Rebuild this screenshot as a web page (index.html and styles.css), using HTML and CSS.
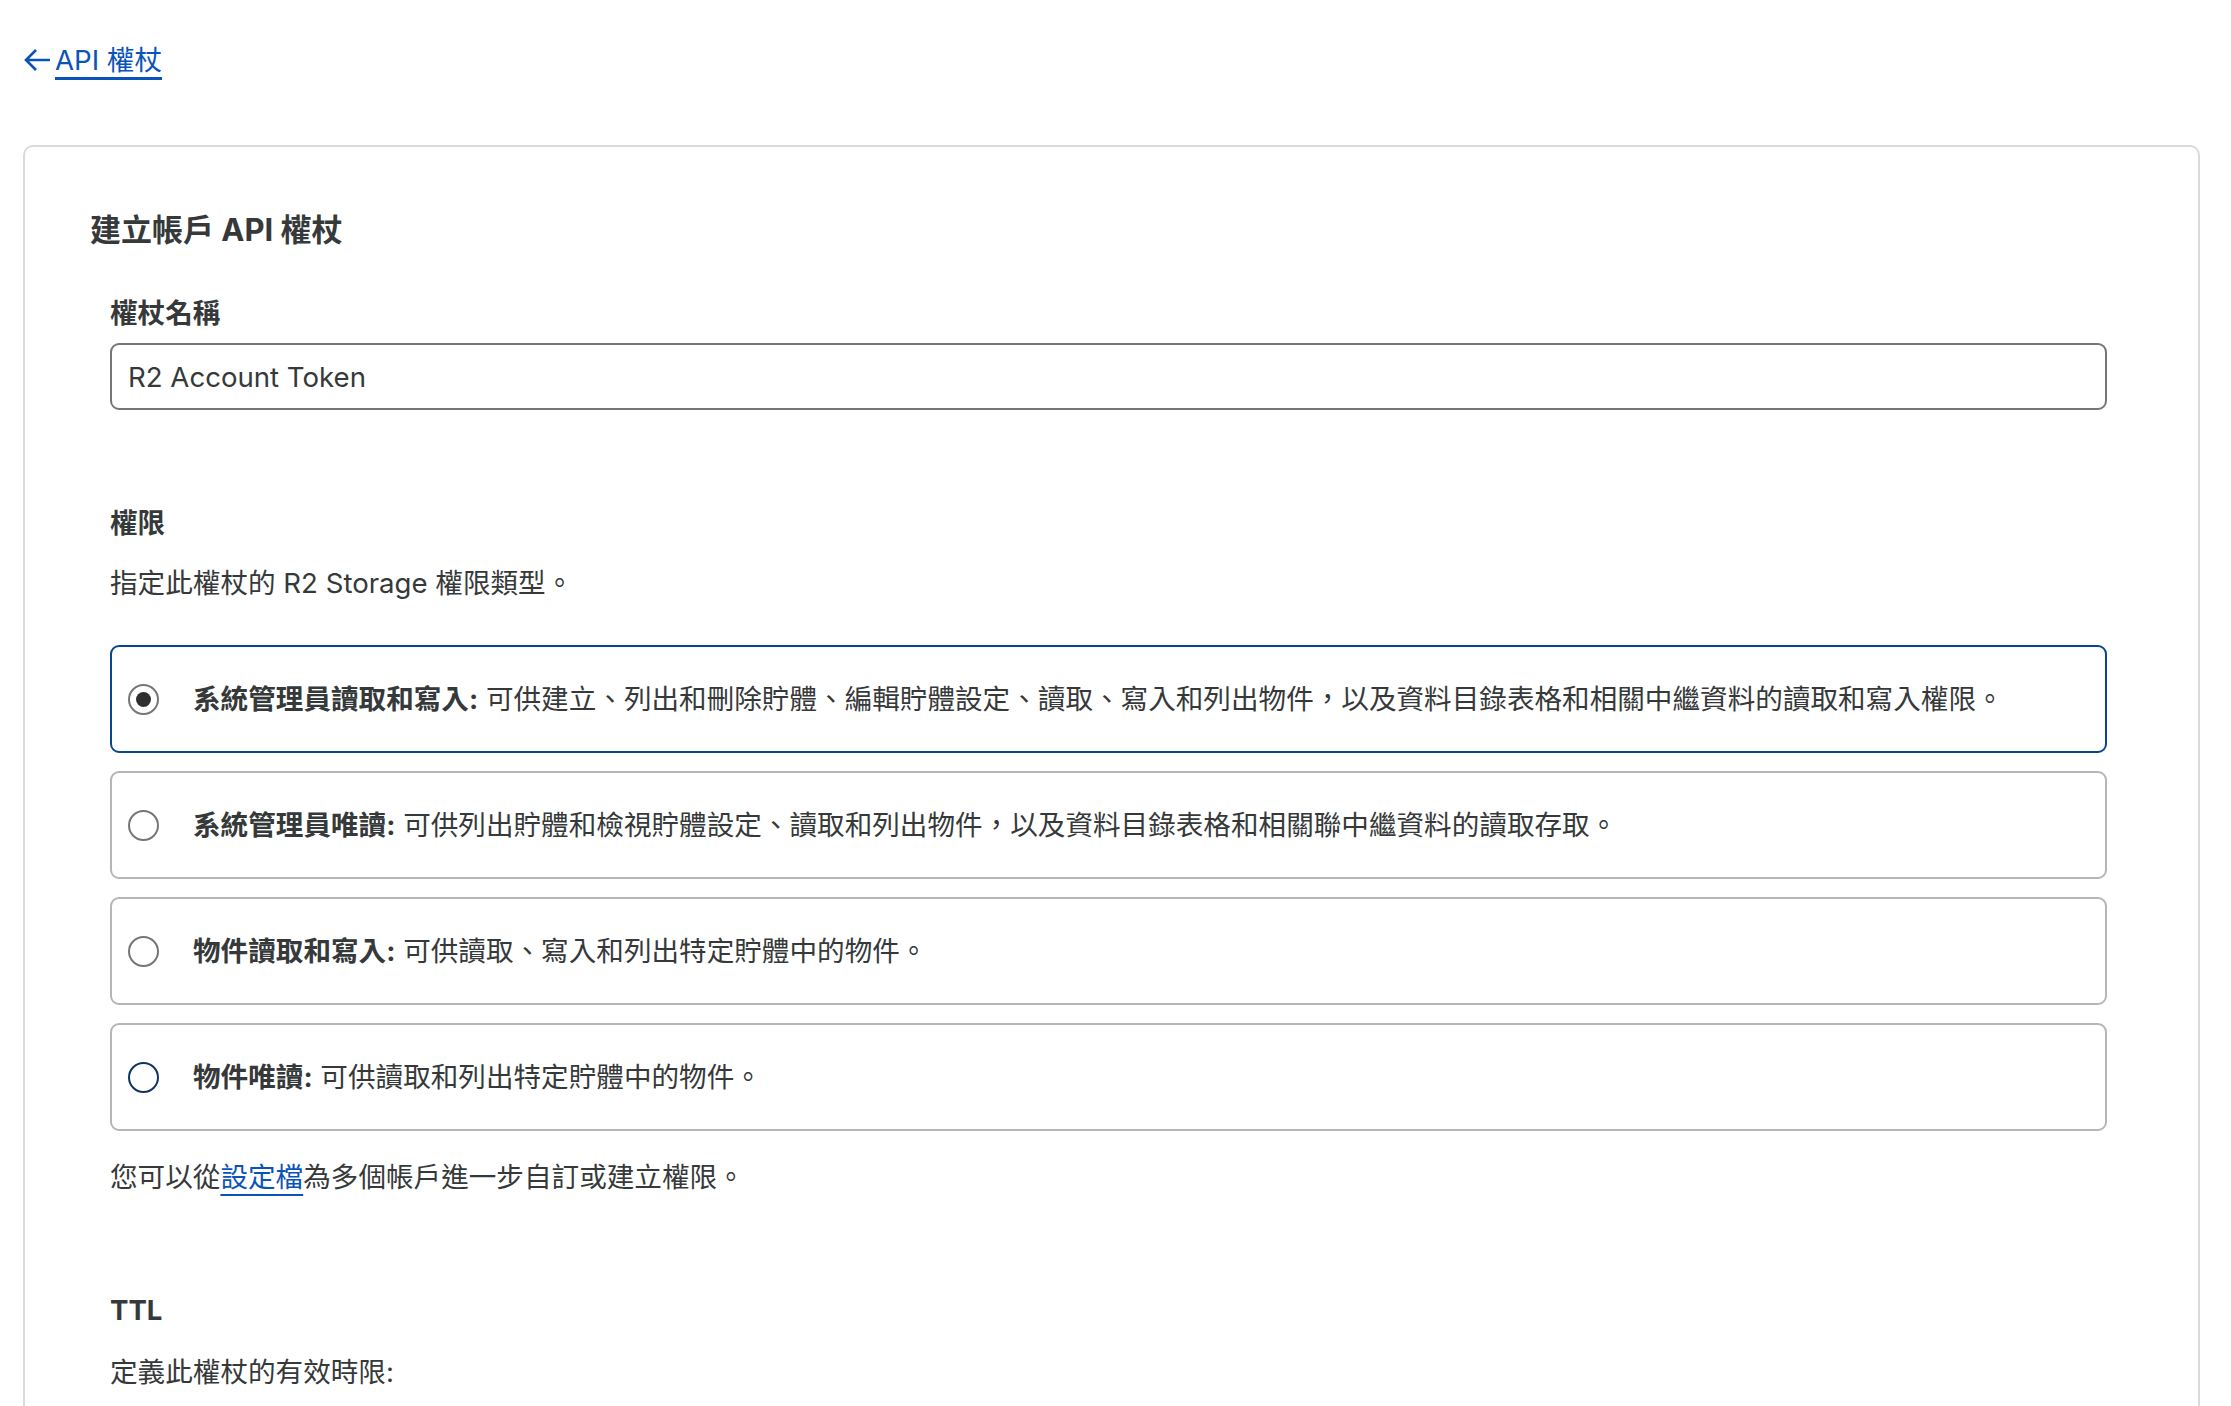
FILE: index.html
```html
<!DOCTYPE html>
<html lang="zh-Hant">
<head>
    <meta charset="utf-8">
    <title>建立帳戶 API 權杖</title>
    <link rel="stylesheet" href="styles.css">
</head>
<body>
<nav class="back">
    <svg class="back-arrow" width="28" height="24" viewBox="0 0 28 24">
        <path d="M26 12H3M12 2L2 12l10 10" fill="none" stroke="#0a53b8" stroke-width="2.6"/>
    </svg>
    <a href="#" class="back-link">API 權杖</a>
</nav>

<main class="card">
    <h1 class="card-title">建立帳戶 API 權杖</h1>

    <div class="fields">
        <section class="field">
            <label class="field-label" for="token-name">權杖名稱</label>
            <input class="text-input" id="token-name" type="text" value="R2 Account Token">
        </section>

        <section class="field perms">
            <h2 class="field-label">權限</h2>
            <p class="field-desc">指定此權杖的 R2 Storage 權限類型。</p>

            <div class="options">
                <label class="option option-on">
                    <span class="radio radio-checked"></span>
                    <span class="option-txt"><b>系統管理員讀取和寫入:</b> 可供建立、列出和刪除貯體、編輯貯體設定、讀取、寫入和列出物件，以及資料目錄表格和相關中繼資料的讀取和寫入權限。</span>
                </label>
                <label class="option">
                    <span class="radio"></span>
                    <span class="option-txt"><b>系統管理員唯讀:</b> 可供列出貯體和檢視貯體設定、讀取和列出物件，以及資料目錄表格和相關聯中繼資料的讀取存取。</span>
                </label>
                <label class="option">
                    <span class="radio"></span>
                    <span class="option-txt"><b>物件讀取和寫入:</b> 可供讀取、寫入和列出特定貯體中的物件。</span>
                </label>
                <label class="option">
                    <span class="radio radio-focus"></span>
                    <span class="option-txt"><b>物件唯讀:</b> 可供讀取和列出特定貯體中的物件。</span>
                </label>
            </div>

            <p class="note">您可以從<a href="#" class="inline-link">設定檔</a>為多個帳戶進一步自訂或建立權限。</p>
        </section>

        <section class="field ttl">
            <h2 class="field-label">TTL</h2>
            <p class="field-desc">定義此權杖的有效時限:</p>
        </section>
    </div>
</main>
</body>
</html>
```

FILE: styles.css
```css
html, body {
    margin: 0;
    padding: 0;
    background-color: #FFFFFF;
    color: #36393a;
    font-family: "Inter", "Noto Sans CJK TC", sans-serif;
    font-size: 27.6px;
}

/* back link */
.back {
    display: flex;
    align-items: center;
    height: 40px;
    padding: 40px 0 0 24px;
}

.back-arrow {
    display: block;
    margin-right: 3px;
}

.back-link {
    color: #0a53b8;
    font-size: 27.6px;
    line-height: 40px;
    text-decoration: underline;
    text-decoration-thickness: 3px;
    text-underline-offset: 7px;
}

/* card */
.card {
    margin: 65px 31px 0 23px;
    height: 1198px;
    padding: 61px 65px 0 65px;
    border: 2px solid #dadada;
    border-bottom: none;
    border-radius: 10px 10px 0 0;
}

.card-title {
    margin: 0;
    font-size: 31px;
    font-weight: 700;
    line-height: 44px;
}

.fields {
    padding: 0 26px 0 20px;
}

.field-label {
    display: block;
    margin: 0;
    font-size: 27.6px;
    font-weight: 700;
    line-height: 40px;
}

.field:first-child {
    margin-top: 41px;
}

.text-input {
    display: block;
    box-sizing: border-box;
    width: 100%;
    height: 67px;
    margin-top: 10px;
    padding: 0 16px;
    border: 2.5px solid #767676;
    border-radius: 9px;
    font-family: inherit;
    font-size: 27.6px;
    color: #36393a;
    outline: none;
}

.perms {
    margin-top: 93px;
}

.field-desc {
    margin: 20px 0 0 0;
    line-height: 40px;
}

.options {
    display: flex;
    flex-direction: column;
    gap: 18px;
    margin-top: 42px;
}

.option {
    display: flex;
    align-items: center;
    box-sizing: border-box;
    height: 108px;
    padding: 0 16px;
    border: 2.5px solid #b6b6b6;
    border-radius: 9px;
    cursor: pointer;
}

.option-on {
    border-color: #0a468f;
}

.radio {
    flex: none;
    box-sizing: border-box;
    width: 31px;
    height: 31px;
    margin-right: 34px;
    border: 2px solid #767676;
    border-radius: 50%;
    display: flex;
    align-items: center;
    justify-content: center;
}

.radio-checked::after {
    content: "";
    width: 15px;
    height: 15px;
    border-radius: 50%;
    background-color: #2f2f2f;
}

.radio-focus {
    border: 2.5px solid #0d3463;
}

.option-txt {
    line-height: 40px;
}

.option-txt b {
    font-weight: 700;
}

.note {
    margin: 26px 0 0 0;
    line-height: 40px;
}

.inline-link {
    color: #0a53b8;
    text-decoration: underline;
    text-decoration-thickness: 2px;
    text-underline-offset: 7px;
}

.ttl {
    margin-top: 93px;
}

.ttl .field-desc {
    margin-top: 22px;
}
```
